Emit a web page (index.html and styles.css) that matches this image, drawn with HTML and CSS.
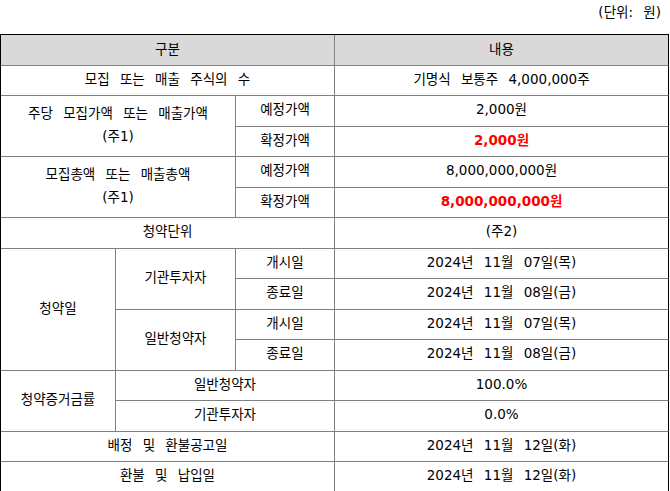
FILE: index.html
```html
<!DOCTYPE html>
<html lang="ko">
<head>
<meta charset="utf-8">
<title>청약 개요</title>
<link rel="stylesheet" href="styles.css">
</head>
<body>
<div class="unit">(단위: 원)</div>
<div class="grid">
  <div class="cell hd s3">구분</div>
  <div class="cell hd v">내용</div>

  <div class="cell s3">모집 또는 매출 주식의 수</div>
  <div class="cell v">기명식 보통주 4,000,000주</div>

  <div class="cell s2 r2 two">주당 모집가액 또는 매출가액<br>(주1)</div>
  <div class="cell">예정가액</div>
  <div class="cell v">2,000원</div>
  <div class="cell">확정가액</div>
  <div class="cell v red">2,000원</div>

  <div class="cell s2 r2 two">모집총액 또는 매출총액<br>(주1)</div>
  <div class="cell">예정가액</div>
  <div class="cell v">8,000,000,000원</div>
  <div class="cell">확정가액</div>
  <div class="cell v red">8,000,000,000원</div>

  <div class="cell s3">청약단위</div>
  <div class="cell v">(주2)</div>

  <div class="cell r4">청약일</div>
  <div class="cell r2">기관투자자</div>
  <div class="cell">개시일</div>
  <div class="cell v">2024년 11월 07일(목)</div>
  <div class="cell">종료일</div>
  <div class="cell v">2024년 11월 08일(금)</div>
  <div class="cell r2">일반청약자</div>
  <div class="cell">개시일</div>
  <div class="cell v">2024년 11월 07일(목)</div>
  <div class="cell">종료일</div>
  <div class="cell v">2024년 11월 08일(금)</div>

  <div class="cell r2">청약증거금률</div>
  <div class="cell s2">일반청약자</div>
  <div class="cell v">100.0%</div>
  <div class="cell s2">기관투자자</div>
  <div class="cell v">0.0%</div>

  <div class="cell s3">배정 및 환불공고일</div>
  <div class="cell v">2024년 11월 12일(화)</div>
  <div class="cell s3">환불 및 납입일</div>
  <div class="cell v">2024년 11월 12일(화)</div>
</div>
</body>
</html>
```

FILE: styles.css
```css
html, body {
  margin: 0;
  padding: 0;
  background: #ffffff;
}

body {
  font-family: "DejaVu Sans", "Noto Sans CJK KR", sans-serif;
  font-size: 13.5px;
  color: #000000;
  word-spacing: 6px;
}

.unit {
  width: 669px;
  height: 34px;
  box-sizing: border-box;
  padding-right: 8px;
  line-height: 25px;
  text-align: right;
}

.grid {
  display: grid;
  width: 669px;
  box-sizing: border-box;
  grid-template-columns: 115px 120px 99px 334px;
  grid-template-rows: 31px 30px repeat(13, 30.5px);
  border-top: 1px solid #000000;
  border-left: 1px solid #000000;
}

.cell {
  display: flex;
  align-items: center;
  justify-content: center;
  text-align: center;
  box-sizing: border-box;
  padding-bottom: 2px;
  border-right: 1px solid #808080;
  border-bottom: 1px solid #808080;
  line-height: 23px;
  white-space: nowrap;
}

.hd {
  background: #d9d9d9;
}

.v {
  border-right-color: #000000;
}

.red {
  color: #ff0000;
  font-weight: bold;
}

.s2 { grid-column: span 2; }
.s3 { grid-column: span 3; }
.r2 { grid-row: span 2; }
.r4 { grid-row: span 4; }
```
